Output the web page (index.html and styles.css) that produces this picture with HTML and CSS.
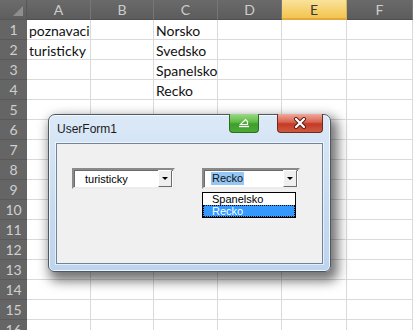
FILE: index.html
```html
<!DOCTYPE html>
<html lang="sk">
<head>
    <meta charset="UTF-8">
    <meta name="viewport" content="width=device-width, initial-scale=1.0">
    <title>Zošit1 - UserForm1</title>
    <link rel="stylesheet" href="styles.css">
</head>
<body>
    <div class="sheet">
        <div class="corner"><span class="tri"></span></div>
        <div class="colhead">A</div>
        <div class="colhead">B</div>
        <div class="colhead">C</div>
        <div class="colhead">D</div>
        <div class="colhead active">E</div>
        <div class="colhead">F</div>

        <div class="rowhead">1</div><div class="cell">poznavaci</div><div class="cell"></div><div class="cell">Norsko</div><div class="cell"></div><div class="cell"></div><div class="cell"></div>
        <div class="rowhead">2</div><div class="cell">turisticky</div><div class="cell"></div><div class="cell">Svedsko</div><div class="cell"></div><div class="cell"></div><div class="cell"></div>
        <div class="rowhead">3</div><div class="cell"></div><div class="cell"></div><div class="cell">Spanelsko</div><div class="cell"></div><div class="cell"></div><div class="cell"></div>
        <div class="rowhead">4</div><div class="cell"></div><div class="cell"></div><div class="cell">Recko</div><div class="cell"></div><div class="cell"></div><div class="cell"></div>
        <div class="rowhead">5</div><div class="cell"></div><div class="cell"></div><div class="cell"></div><div class="cell"></div><div class="cell"></div><div class="cell"></div>
        <div class="rowhead">6</div><div class="cell"></div><div class="cell"></div><div class="cell"></div><div class="cell"></div><div class="cell"></div><div class="cell"></div>
        <div class="rowhead">7</div><div class="cell"></div><div class="cell"></div><div class="cell"></div><div class="cell"></div><div class="cell"></div><div class="cell"></div>
        <div class="rowhead">8</div><div class="cell"></div><div class="cell"></div><div class="cell"></div><div class="cell"></div><div class="cell"></div><div class="cell"></div>
        <div class="rowhead">9</div><div class="cell"></div><div class="cell"></div><div class="cell"></div><div class="cell"></div><div class="cell"></div><div class="cell"></div>
        <div class="rowhead">10</div><div class="cell"></div><div class="cell"></div><div class="cell"></div><div class="cell"></div><div class="cell"></div><div class="cell"></div>
        <div class="rowhead">11</div><div class="cell"></div><div class="cell"></div><div class="cell"></div><div class="cell"></div><div class="cell"></div><div class="cell"></div>
        <div class="rowhead">12</div><div class="cell"></div><div class="cell"></div><div class="cell"></div><div class="cell"></div><div class="cell"></div><div class="cell"></div>
        <div class="rowhead">13</div><div class="cell"></div><div class="cell"></div><div class="cell"></div><div class="cell"></div><div class="cell"></div><div class="cell"></div>
        <div class="rowhead">14</div><div class="cell"></div><div class="cell"></div><div class="cell"></div><div class="cell"></div><div class="cell"></div><div class="cell"></div>
        <div class="rowhead">15</div><div class="cell"></div><div class="cell"></div><div class="cell"></div><div class="cell"></div><div class="cell"></div><div class="cell"></div>
        <div class="rowhead">16</div><div class="cell"></div><div class="cell"></div><div class="cell"></div><div class="cell"></div><div class="cell"></div><div class="cell"></div>
    </div>

    <!-- UserForm nad hárkom -->
    <div class="dialog">
        <div class="titlebar">
            <span class="title">UserForm1</span>
            <span class="tbtn green">
                <svg width="12" height="10" viewBox="0 0 12 10">
                    <path d="M2.5 6.5 L7.5 1.5 L9.5 3.5 L9.5 6.5 Z" fill="none" stroke="#fff" stroke-width="1.2"/>
                    <path d="M1 8.5 H11" stroke="#fff" stroke-width="1.4"/>
                </svg>
            </span>
            <span class="tbtn red">
                <svg width="14" height="12" viewBox="0 0 14 12">
                    <path d="M3 2 L11 10 M11 2 L3 10" stroke="#5a1a12" stroke-width="4" stroke-linecap="round"/>
                    <path d="M3 2 L11 10 M11 2 L3 10" stroke="#fff" stroke-width="2.2" stroke-linecap="round"/>
                </svg>
            </span>
        </div>
        <div class="client">
            <div class="combo first">
                <span class="combo-text">turisticky</span>
                <span class="drop"><span class="arrow"></span></span>
            </div>
            <div class="combo second">
                <span class="combo-text"><span class="sel">Recko</span></span>
                <span class="drop"><span class="arrow"></span></span>
                <div class="list">
                    <div class="item">Spanelsko</div>
                    <div class="item picked">Recko</div>
                </div>
            </div>
        </div>
    </div>
</body>
</html>
```

FILE: styles.css
```css
body {
    margin: 0;
    padding: 0;
    background-color: #fff;
    font-family: Lato, "Liberation Sans", sans-serif;
    overflow: hidden;
    height: 330px;
}
.sheet {
    display: grid;
    grid-template-columns: 27px 64px 63px 64px 64px 65px 66px;
    grid-auto-rows: 20px;
    font-size: 14px;
}
.corner {
    background: linear-gradient(#6c6c6c, #5e5e5e);
    border-right: 1px solid #575757;
    border-bottom: 1px solid #575757;
    box-sizing: border-box;
    display: flex;
    justify-content: flex-end;
    align-items: flex-end;
    padding: 0 3px 3px 0;
}
.corner .tri {
    width: 0;
    height: 0;
    border-left: 10px solid transparent;
    border-bottom: 10px solid #8e8e8e;
}
.colhead {
    background: linear-gradient(#6a6a6a, #5c5c5c);
    color: #cdcdcd;
    text-align: center;
    line-height: 20px;
    border-right: 1px solid #777;
    border-bottom: 1px solid #4f4f4f;
    box-sizing: border-box;
}
.colhead.active {
    background: linear-gradient(#fae29a, #f2c54f);
    color: #3a3a3a;
    border-bottom: 2px solid #e3a93c;
    border-right-color: #d9b45a;
}
.rowhead {
    background: #656565;
    color: #cfcfcf;
    text-align: center;
    line-height: 20px;
    border-bottom: 1px solid #595959;
    box-sizing: border-box;
}
.cell {
    border-right: 1px solid #dadada;
    border-bottom: 1px solid #dadada;
    box-sizing: border-box;
    padding: 1px 0 0 2px;
    line-height: 19px;
    color: #111;
    white-space: nowrap;
}

/* okno formulára */
.dialog {
    position: absolute;
    left: 48px;
    top: 114px;
    width: 283px;
    height: 158px;
    box-sizing: border-box;
    border: 1px solid #4d5865;
    border-radius: 7px 7px 6px 6px;
    background: linear-gradient(#dce9f7, #c6dbf1 60%, #bcd4ee);
    box-shadow: inset 0 0 0 1px rgba(255, 255, 255, 0.75), 4px 6px 12px 3px rgba(0, 0, 0, 0.55);
    display: flex;
    flex-direction: column;
    padding: 0 7px 7px;
}
.titlebar {
    height: 28px;
    display: flex;
    align-items: flex-start;
}
.title {
    font-family: "Liberation Sans", sans-serif;
    font-size: 12px;
    color: #1b1b1b;
    line-height: 28px;
    padding-left: 1px;
}
.tbtn {
    margin-top: -1px;
    height: 19px;
    box-sizing: border-box;
    border-radius: 0 0 4px 4px;
    display: flex;
    align-items: center;
    justify-content: center;
}
.tbtn.green {
    margin-left: auto;
    width: 30px;
    background: linear-gradient(#9ad985, #5fbb45 45%, #3f9f2c 55%, #4aab35);
    border: 1px solid #2f6a25;
    border-top: none;
}
.tbtn.red {
    margin-left: 18px;
    width: 46px;
    background: linear-gradient(#eeaa9c, #d9634f 45%, #c23a27 55%, #cf5a3f);
    border: 1px solid #6a2b22;
    border-top: none;
}
.client {
    flex: 1;
    background: #f0f0f0;
    border: 1px solid #70839a;
    box-shadow: 0 0 0 1px rgba(255, 255, 255, 0.6);
    display: flex;
    align-items: flex-start;
    gap: 27px;
    padding: 24px 0 0 15px;
}

/* combobox */
.combo {
    position: relative;
    height: 21px;
    box-sizing: border-box;
    border: 2px solid;
    border-color: #8a8a8a #ececec #ececec #8a8a8a;
    box-shadow: inset 1px 1px 0 #6b6b6b;
    background: #fff;
    display: flex;
    align-items: stretch;
    font-family: "Liberation Sans", sans-serif;
    font-size: 11px;
    color: #000;
}
.combo.first {
    width: 103px;
}
.combo.second {
    width: 98px;
}
.combo-text {
    flex: 1;
    display: flex;
    align-items: center;
    padding-left: 11px;
}
.combo.second .combo-text {
    padding-left: 7px;
}
.sel {
    background: #96c6f1;
    color: #0a1424;
    padding: 0 1px;
    line-height: 13px;
}
.drop {
    width: 14px;
    margin-right: 1px;
    box-sizing: border-box;
    background: #efefef;
    border: 1px solid;
    border-color: #fff #6b6b6b #6b6b6b #fff;
    display: flex;
    align-items: center;
    justify-content: center;
}
.arrow {
    width: 0;
    height: 0;
    border-left: 3px solid transparent;
    border-right: 3px solid transparent;
    border-top: 3px solid #000;
}
.list {
    position: absolute;
    top: 22px;
    left: -2px;
    width: 94px;
    height: 26px;
    box-sizing: border-box;
    border: 1px solid #000;
    background: #fff;
}
.item {
    height: 12px;
    line-height: 12px;
    padding-left: 9px;
}
.item.picked {
    background: #3399ff;
    color: #fff;
    outline: 1px dotted #000;
    outline-offset: -1px;
}
```
